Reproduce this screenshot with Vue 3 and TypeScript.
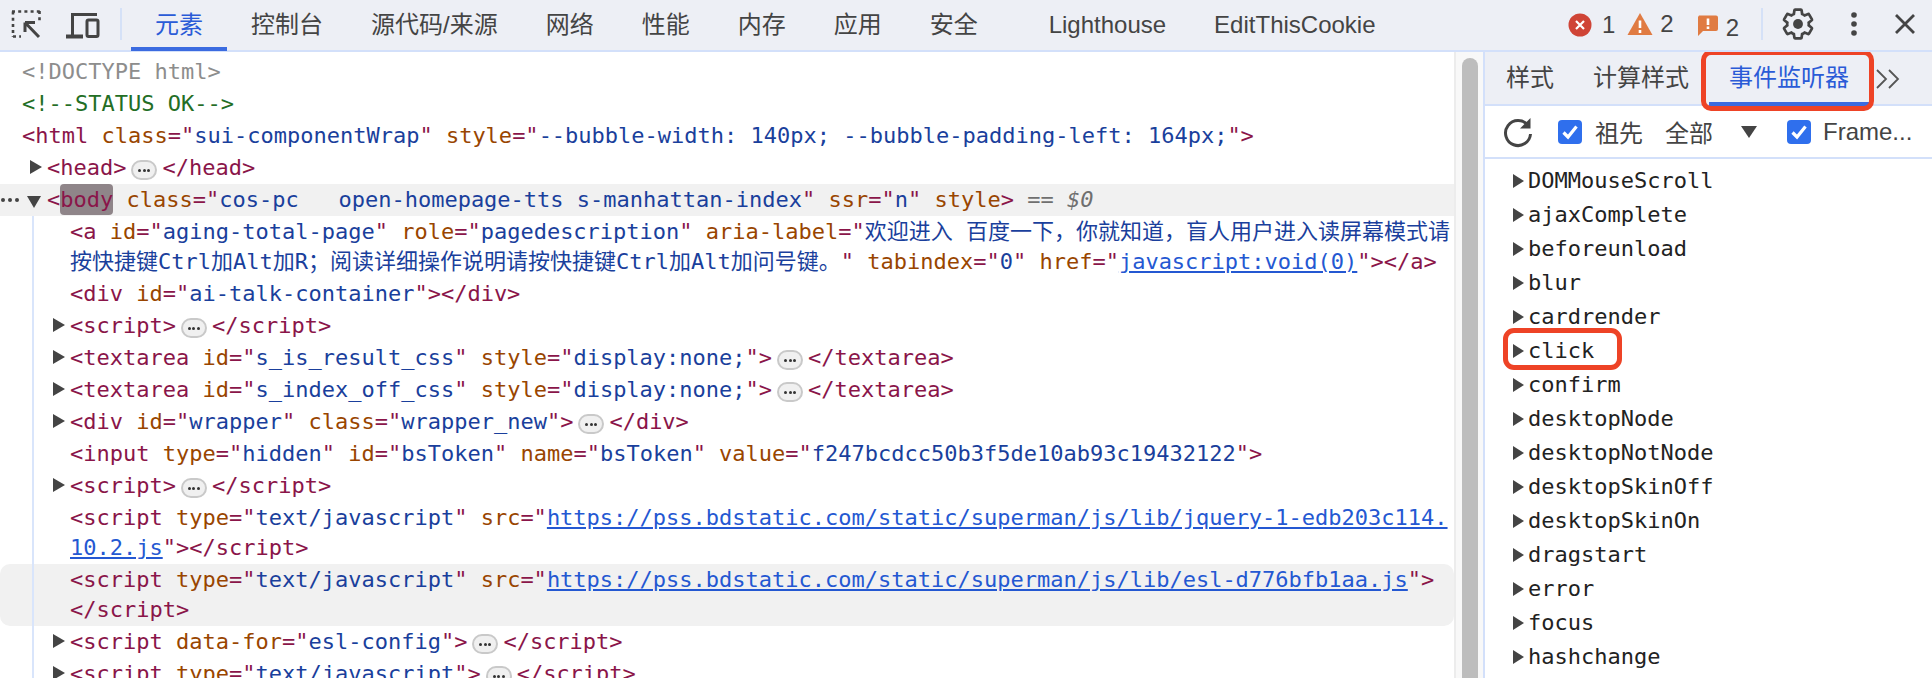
<script setup lang="ts">
type Seg = [string, string]
interface Row { level: number; exp?: 'r' | 'd'; segs: Seg[]; cls?: string }

const tabs = ['控制台', '源代码/来源', '网络', '性能', '内存', '应用', '安全']
const events = ['DOMMouseScroll', 'ajaxComplete', 'beforeunload', 'blur', 'cardrender', 'click', 'confirm', 'desktopNode', 'desktopNotNode', 'desktopSkinOff', 'desktopSkinOn', 'dragstart', 'error', 'focus', 'hashchange']

const SC = 'script'
const closeS = '<' + '/' + SC + '>'

const rows: Row[] = [
  { level: 0, segs: [['dt', '<!DOCTYPE html>']] },
  { level: 0, segs: [['cm', '<!--STATUS OK-->']] },
  { level: 0, segs: [['t', '<html'], ['n', ' class'], ['t', '="'], ['v', 'sui-componentWrap'], ['t', '"'], ['n', ' style'], ['t', '="'], ['v', '--bubble-width: 140px; --bubble-padding-left: 164px;'], ['t', '">']] },
  { level: 1, exp: 'r', segs: [['t', '<head>'], ['b', ''], ['t', '</head>']] },
  { level: 1, exp: 'd', cls: 'is-current', segs: [['t', '<'], ['hl', 'body'], ['n', ' class'], ['t', '="'], ['v', 'cos-pc   open-homepage-tts s-manhattan-index'], ['t', '"'], ['n', ' ssr'], ['t', '="'], ['v', 'n'], ['t', '"'], ['n', ' style'], ['t', '>'], ['eq', ' == '], ['eqi', '$0']] },
  { level: 2, segs: [['t', '<a'], ['n', ' id'], ['t', '="'], ['v', 'aging-total-page'], ['t', '"'], ['n', ' role'], ['t', '="'], ['v', 'pagedescription'], ['t', '"'], ['n', ' aria-label'], ['t', '="'], ['v', '欢迎进入 百度一下，你就知道，盲人用户进入读屏幕模式请\n按快捷键Ctrl加Alt加R；阅读详细操作说明请按快捷键Ctrl加Alt加问号键。'], ['t', '"'], ['n', ' tabindex'], ['t', '="'], ['v', '0'], ['t', '"'], ['n', ' href'], ['t', '="'], ['l', 'javascript:void(0)'], ['t', '"></a>']] },
  { level: 2, segs: [['t', '<div'], ['n', ' id'], ['t', '="'], ['v', 'ai-talk-container'], ['t', '"></div>']] },
  { level: 2, exp: 'r', segs: [['t', '<' + SC + '>'], ['b', ''], ['t', closeS]] },
  { level: 2, exp: 'r', segs: [['t', '<textarea'], ['n', ' id'], ['t', '="'], ['v', 's_is_result_css'], ['t', '"'], ['n', ' style'], ['t', '="'], ['v', 'display:none;'], ['t', '">'], ['b', ''], ['t', '</textarea>']] },
  { level: 2, exp: 'r', segs: [['t', '<textarea'], ['n', ' id'], ['t', '="'], ['v', 's_index_off_css'], ['t', '"'], ['n', ' style'], ['t', '="'], ['v', 'display:none;'], ['t', '">'], ['b', ''], ['t', '</textarea>']] },
  { level: 2, exp: 'r', segs: [['t', '<div'], ['n', ' id'], ['t', '="'], ['v', 'wrapper'], ['t', '"'], ['n', ' class'], ['t', '="'], ['v', 'wrapper_new'], ['t', '">'], ['b', ''], ['t', '</div>']] },
  { level: 2, segs: [['t', '<input'], ['n', ' type'], ['t', '="'], ['v', 'hidden'], ['t', '"'], ['n', ' id'], ['t', '="'], ['v', 'bsToken'], ['t', '"'], ['n', ' name'], ['t', '="'], ['v', 'bsToken'], ['t', '"'], ['n', ' value'], ['t', '="'], ['v', 'f247bcdcc50b3f5de10ab93c19432122'], ['t', '">']] },
  { level: 2, exp: 'r', segs: [['t', '<' + SC + '>'], ['b', ''], ['t', closeS]] },
  { level: 2, segs: [['t', '<' + SC], ['n', ' type'], ['t', '="'], ['v', 'text/javascript'], ['t', '"'], ['n', ' src'], ['t', '="'], ['l', 'https://pss.bdstatic.com/static/superman/js/lib/jquery-1-edb203c114.\n10.2.js'], ['t', '">' + closeS]] },
  { level: 2, cls: 'is-hover', segs: [['t', '<' + SC], ['n', ' type'], ['t', '="'], ['v', 'text/javascript'], ['t', '"'], ['n', ' src'], ['t', '="'], ['l', 'https://pss.bdstatic.com/static/superman/js/lib/esl-d776bfb1aa.js'], ['t', '">\n' + closeS]] },
  { level: 2, exp: 'r', segs: [['t', '<' + SC], ['n', ' data-for'], ['t', '="'], ['v', 'esl-config'], ['t', '">'], ['b', ''], ['t', closeS]] },
  { level: 2, exp: 'r', segs: [['t', '<' + SC], ['n', ' type'], ['t', '="'], ['v', 'text/javascript'], ['t', '">'], ['b', ''], ['t', closeS]] }
]
</script>

<template>
  <div class="devtools">
    <header class="topbar">
      <div class="tool-icons">
        <svg class="ic-inspect" width="30" height="30" viewBox="0 0 30 30">
          <path d="M1 2.5H29" fill="none" stroke="#444" stroke-width="2.6" stroke-dasharray="3 3.2" />
          <path d="M2 2.5V28" fill="none" stroke="#444" stroke-width="2.6" stroke-dasharray="3 3.2" />
          <path d="M2 27.5H10" fill="none" stroke="#444" stroke-width="2.6" stroke-dasharray="3 3.2" />
          <path d="M28.5 2V14" fill="none" stroke="#444" stroke-width="2.6" stroke-dasharray="3 3.2" />
          <path d="M14 13.5H24M14 13.5V23M14 13.5L28 28" fill="none" stroke="#444" stroke-width="3" />
        </svg>
        <svg class="ic-device" width="34" height="28" viewBox="0 0 34 28">
          <path d="M6.5 24V2.5H31" fill="none" stroke="#444" stroke-width="3" />
          <path d="M0 24.5H17" fill="none" stroke="#444" stroke-width="4" />
          <rect x="21" y="8" width="11" height="16.500" rx="1.500" fill="none" stroke="#444" stroke-width="3" />
        </svg>
        <span class="vsep"></span>
      </div>
      <nav class="tabs">
        <span class="tab active">元素</span>
        <span v-for="t in tabs" :key="t" class="tab">{{ t }}</span>
        <span class="tab first-extra">Lighthouse</span>
        <span class="tab">EditThisCookie</span>
      </nav>
      <div class="status">
        <svg class="st-error" width="24" height="24" viewBox="0 0 24 24">
          <circle cx="12" cy="12" r="11.500" fill="#cf4436" />
          <path d="M8 8L16 16M16 8L8 16" stroke="#fff" stroke-width="2.200" />
        </svg>
        <span class="num n1">1</span>
        <svg class="st-warn" width="26" height="24" viewBox="0 0 26 24">
          <path d="M13 1L25.500 23H.5z" fill="#e07b42" />
          <path d="M13 8.500V16M13 18V21" stroke="#fff" stroke-width="2.600" />
        </svg>
        <span class="num n2">2</span>
        <svg class="st-issue" width="22" height="22" viewBox="0 0 22 22">
          <path d="M2 .5H19a2 2 0 0 1 2 2V14a2 2 0 0 1-2 2H6L1 21V2z" fill="#e07b42" />
          <path d="M11 3.500V10M11 11.500V14" stroke="#fff" stroke-width="2.600" />
        </svg>
        <span class="num n3">2</span>
        <span class="vsep vsep-r"></span>
        <svg class="ic-gear" width="36" height="36" viewBox="0 0 24 24">
          <path d="M19.14 12.94c.04-.3.06-.61.06-.94 0-.32-.02-.64-.07-.94l2.03-1.58c.18-.14.23-.41.12-.61l-1.92-3.32c-.12-.22-.37-.29-.59-.22l-2.39.96c-.5-.38-1.03-.7-1.62-.94l-.36-2.54c-.04-.24-.24-.41-.48-.41h-3.84c-.24 0-.43.17-.47.41l-.36 2.54c-.59.24-1.13.57-1.62.94l-2.39-.96c-.22-.08-.47 0-.59.22L2.74 8.870c-.12.21-.08.47.12.61l2.03 1.58c-.05.3-.09.63-.09.94s.02.64.07.94l-2.03 1.58c-.18.14-.23.41-.12.61l1.92 3.32c.12.22.37.29.59.22l2.39-.96c.5.38 1.03.7 1.62.94l.36 2.54c.05.24.24.41.48.41h3.84c.24 0 .44-.17.47-.41l.36-2.54c.59-.24 1.13-.56 1.62-.94l2.39.96c.22.08.47 0 .59-.22l1.92-3.32c.12-.22.07-.47-.12-.61l-2.010-1.58z" fill="none" stroke="#444" stroke-width="1.800" />
          <circle cx="12" cy="12" r="3.300" fill="#444" />
        </svg>
        <svg class="ic-more" width="8" height="26" viewBox="0 0 8 26">
          <circle cx="4" cy="4" r="2.800" fill="#444" />
          <circle cx="4" cy="13" r="2.800" fill="#444" />
          <circle cx="4" cy="22" r="2.800" fill="#444" />
        </svg>
        <svg class="ic-close" width="22" height="22" viewBox="0 0 22 22">
          <path d="M2 2L20 20M20 2L2 20" stroke="#444" stroke-width="2.800" />
        </svg>
      </div>
    </header>

    <main class="body">
      <section class="tree">
        <div v-for="(r, i) in rows" :key="i" class="row" :class="[`lv${r.level}`, r.cls]">
          <span v-if="r.cls === 'is-current'" class="row-dots"><i></i><i></i><i></i></span>
          <span v-if="r.level > 0" class="gutter">
            <span v-if="r.exp === 'r'" class="tri-r"></span>
            <span v-else-if="r.exp === 'd'" class="tri-d"></span>
          </span>
          <div class="code"><template v-for="(s, j) in r.segs" :key="j"><span v-if="s[0] === 'b'" class="badge"><i></i><i></i><i></i></span><span v-else :class="`c-${s[0]}`">{{ s[1] }}</span></template></div>
        </div>
      </section>

      <div class="scroll-gutter"><div class="thumb"></div></div>

      <aside class="side">
        <div class="side-tabs">
          <span class="stab s1">样式</span>
          <span class="stab s2">计算样式</span>
          <span class="stab s3 active">事件监听器</span>
          <svg class="chev" width="26" height="22" viewBox="0 0 26 22">
            <path d="M2 2L11 11L2 20M14 2L23 11L14 20" fill="none" stroke="#555" stroke-width="1.800" />
          </svg>
        </div>
        <div class="side-tools">
          <svg class="ic-refresh" width="30" height="32" viewBox="0 0 30 32">
            <path d="M25 9.500A12.500 12.500 0 1 0 27.500 18" fill="none" stroke="#444" stroke-width="3" />
            <path d="M27.500 2V12.500H17z" fill="#444" />
          </svg>
          <span class="check c1"><svg width="24" height="24" viewBox="0 0 24 24"><path d="M5.500 12.500L10 17L18.500 6.500" fill="none" stroke="#fff" stroke-width="3.200" /></svg></span>
          <span class="tool-label l1">祖先</span>
          <span class="tool-label l2">全部</span>
          <span class="sel-tri"></span>
          <span class="check c2"><svg width="24" height="24" viewBox="0 0 24 24"><path d="M5.500 12.500L10 17L18.500 6.500" fill="none" stroke="#fff" stroke-width="3.200" /></svg></span>
          <span class="tool-label l3">Frame...</span>
        </div>
        <ul class="events">
          <li v-for="e in events" :key="e" class="event"><span class="ev-tri"></span>{{ e }}</li>
        </ul>
      </aside>

      <div class="mark mark-tab"></div>
      <div class="mark mark-click"></div>
    </main>
  </div>
</template>

<style>
html, body { margin: 0; background: #fff; overflow: hidden; }
</style>

<style scoped>
.devtools {
  width: 1932px;
  height: 678px;
  overflow: hidden;
  display: flex;
  flex-direction: column;
  font-family: "Liberation Sans", "Noto Sans CJK SC", sans-serif;
}
.topbar {
  flex: none;
  height: 52px;
  box-sizing: border-box;
  background: #edeff5;
  border-bottom: 2px solid #d3e0fa;
  display: flex;
  align-items: flex-start;
}
.tool-icons {
  width: 131px;
  height: 50px;
  flex: none;
  display: flex;
  align-items: flex-start;
}
.ic-inspect { margin: 9px 0 0 11px; }
.ic-device { margin: 12px 0 0 25px; }
.vsep {
  display: block;
  width: 2px;
  height: 32px;
  margin: 8px 0 0 20px;
  background: #d5e1f7;
}
.tabs { display: flex; height: 50px; }
.tab {
  box-sizing: border-box;
  height: 51px;
  padding: 0 24px;
  font-size: 24px;
  line-height: 50px;
  color: #444;
  white-space: nowrap;
}
.tab.active {
  color: #2a5bd7;
  border-bottom: 4px solid #3b6be0;
}
.first-extra { margin-left: 23px; }
.status {
  margin-left: auto;
  width: 382px;
  flex: none;
  height: 50px;
  display: flex;
  align-items: flex-start;
}
.st-error { margin: 13px 0 0 18px; }
.num { font-size: 24px; line-height: 28px; color: #444; }
.n1 { margin: 11px 0 0 10px; }
.st-warn { margin: 12px 0 0 12px; }
.n2 { margin: 10px 0 0 7px; }
.st-issue { margin: 15px 0 0 23px; }
.n3 { margin: 14px 0 0 7px; }
.vsep-r { margin: 8px 0 0 22px; }
.ic-gear { margin: 6px 0 0 17px; }
.ic-more { margin: 11px 0 0 34px; }
.ic-close { margin: 13px 0 0 36px; }

.body {
  position: relative;
  flex: 1;
  min-height: 0;
  display: flex;
  overflow: hidden;
}
.tree {
  width: 1454px;
  flex: none;
  box-sizing: border-box;
  padding-top: 4px;
  overflow: hidden;
  font-family: "DejaVu Sans Mono", "Noto Sans CJK SC", monospace;
  font-size: 22px;
  line-height: 30px;
}
.row {
  position: relative;
  display: flex;
  padding: 1px 0;
  white-space: pre;
}
.lv0 { padding-left: 22px; }
.lv1 { padding-left: 30px; }
.lv2 { padding-left: 53px; }
.lv2::before {
  content: "";
  position: absolute;
  left: 32px;
  top: 0;
  bottom: 0;
  width: 2px;
  background: #d9e5fb;
}
.is-current { background: #f1f1f1; }
.is-hover { background: #f1f1f1; border-radius: 10px; }
.row-dots {
  position: absolute;
  left: 1px;
  top: 14px;
  display: flex;
  gap: 3px;
}
.row-dots i { width: 4px; height: 4px; border-radius: 50%; background: #444; }
.gutter { flex: none; width: 17px; position: relative; }
.tri-r {
  position: absolute;
  left: 0;
  top: 7px;
  border-left: 12px solid #444;
  border-top: 7px solid transparent;
  border-bottom: 7px solid transparent;
}
.tri-d {
  position: absolute;
  left: -3px;
  top: 11px;
  border-top: 12px solid #444;
  border-left: 7.500px solid transparent;
  border-right: 7.500px solid transparent;
}
.code { color: #881e4f; }
.c-t { color: #8a1549; }
.c-n { color: #994500; }
.c-v { color: #1a3f9c; }
.c-l { color: #2458d2; text-decoration: underline; }
.c-dt { color: #8d8d8d; }
.c-cm { color: #236e25; }
.c-eq { color: #6f6f6f; }
.c-eqi { color: #6f6f6f; font-style: italic; }
.c-hl {
  color: #8a1549;
  background: #8f8589;
  border-radius: 4px;
  padding: 3px 0;
}
.badge {
  display: inline-flex;
  box-sizing: border-box;
  width: 26px;
  height: 20px;
  margin: -6px 5px;
  vertical-align: middle;
  position: relative;
  top: 1px;
  align-items: center;
  justify-content: center;
  gap: 1.500px;
  background: #f0f0f0;
  border: 2px solid #c9c9c9;
  border-radius: 10px;
}
.badge i { width: 3px; height: 3px; border-radius: 50%; background: #333; }

.scroll-gutter {
  width: 29px;
  flex: none;
  box-sizing: border-box;
  background: #f8f8f8;
  border-left: 2px solid #ececec;
  padding: 6px 0 0 6px;
}
.thumb {
  width: 16px;
  height: 700px;
  background: #bdbdbd;
  border-radius: 8px;
}
.side {
  flex: 1;
  min-width: 0;
  border-left: 2px solid #d3e0fa;
  background: #fff;
}
.side-tabs {
  position: relative;
  height: 54px;
  box-sizing: border-box;
  background: #edeff5;
  border-bottom: 2px solid #d3e0fa;
  display: flex;
  font-size: 24px;
  line-height: 52px;
  color: #444;
}
.stab { white-space: nowrap; height: 52px; box-sizing: border-box; }
.s1 { margin-left: 21px; }
.s2 { margin-left: 39px; }
.s3 { margin-left: 20px; padding: 0 20px; }
.stab.active { color: #2a5bd7; border-bottom: 4px solid #3b6be0; height: 54px; }
.chev { margin: 16px 0 0 6px; }
.side-tools {
  height: 53px;
  box-sizing: border-box;
  border-bottom: 2px solid #d3e0fa;
  display: flex;
  align-items: center;
  font-size: 24px;
  color: #444;
}
.ic-refresh { margin-left: 18px; }
.check {
  display: block;
  width: 24px;
  height: 24px;
  border-radius: 4px;
  background: #2f6fed;
  flex: none;
}
.check svg { display: block; }
.c1 { margin-left: 25px; }
.tool-label { white-space: nowrap; }
.l1 { margin-left: 13px; }
.l2 { margin-left: 22px; }
.sel-tri {
  margin-left: 28px;
  border-top: 12px solid #444;
  border-left: 8px solid transparent;
  border-right: 8px solid transparent;
}
.c2 { margin-left: 30px; }
.l3 { margin-left: 12px; }
.events {
  list-style: none;
  margin: 0;
  padding: 5px 0 0 28px;
  font-family: "DejaVu Sans Mono", monospace;
  font-size: 22px;
  color: #222;
}
.event {
  height: 34px;
  line-height: 34px;
  display: flex;
  align-items: center;
  white-space: pre;
}
.ev-tri {
  flex: none;
  margin-right: 4px;
  border-left: 11px solid #444;
  border-top: 7px solid transparent;
  border-bottom: 7px solid transparent;
}
.mark {
  position: absolute;
  box-sizing: border-box;
  border: 5px solid #ee4326;
  pointer-events: none;
}
.mark-tab { left: 1701px; top: -2px; width: 173px; height: 61px; border-radius: 10px; }
.mark-click { left: 1503px; top: 276px; width: 119px; height: 42px; border-radius: 11px; }
</style>
